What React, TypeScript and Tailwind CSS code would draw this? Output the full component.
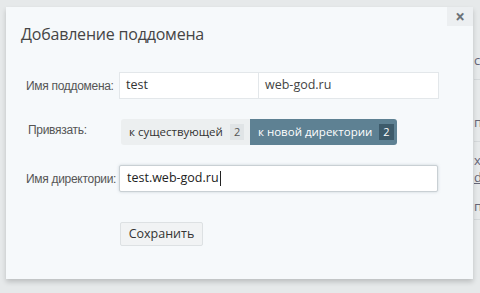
import React from "react";

const font = { fontFamily: '"Open Sans", "Noto Sans", Arial, sans-serif' };
const labelFont = { fontFamily: '"Liberation Sans", Arial, sans-serif' };

function Label({ children, className = "" }: { children: React.ReactNode; className?: string }) {
  return (
    <div
      className={`w-[93px] shrink-0 whitespace-nowrap text-[12px] tracking-[-0.3px] text-[#555] ${className}`}
      style={labelFont}
    >
      {children}
    </div>
  );
}

export default function App() {
  return (
    <div className="flex h-[293px] w-[480px] overflow-hidden bg-[#e6e9ea] pt-[7px] pl-[6px]" style={font}>
      <div className="relative h-[272px] w-[467px] shrink-0 bg-[#f6f9fb] shadow-[0_3px_5px_rgba(0,0,0,0.18)]">
        <button
          type="button"
          className="absolute right-0 top-0 flex h-[19px] w-[26px] items-center justify-center bg-[#eceff1] text-[17px] font-bold leading-none text-[#6b7278]"
        >
          ×
        </button>

        <h1 className="pl-[15px] pt-[16px] text-[16px] leading-[22px] tracking-[-0.2px] text-[#454545]">
          Добавление поддомена
        </h1>

        <div className="mt-[27px] flex items-center pl-[20px]">
          <Label>Имя поддомена:</Label>
          <div className="flex h-[27px] w-[320px] border border-[#e3e7ea] bg-white text-[12.5px] text-[#333]">
            <div className="flex w-[139px] items-center border-r border-[#e3e7ea] pl-[6px]">test</div>
            <div className="flex flex-1 items-center pl-[6px] text-[#444]">web-god.ru</div>
          </div>
        </div>

        <div className="mt-[20px] flex items-center pl-[22px]">
          <Label className="w-[91px] -mt-[5px]">Привязать:</Label>
          <div className="flex h-[26px] text-[11.5px]">
            <div className="flex w-[129px] items-center gap-[7px] rounded-l-[3px] bg-[#eceff0] pl-[8px] text-[#333]">
              к существующей
              <span className="flex h-[16px] items-center bg-[#e0e4e6] px-[4px] text-[11px] text-[#555]">2</span>
            </div>
            <div className="flex w-[147px] items-center gap-[7px] rounded-r-[3px] bg-[#5e8193] pl-[8px] text-white">
              к новой директории
              <span className="flex h-[16px] items-center bg-[#3d5b6b] px-[4px] text-[11px] text-white">2</span>
            </div>
          </div>
        </div>

        <div className="mt-[20px] flex items-center pl-[20px]">
          <Label>Имя директории:</Label>
          <div className="flex h-[27px] w-[319px] items-center rounded-[2px] border border-[#c9d0d4] bg-white pl-[7px] text-[12.5px] text-[#222] shadow-[0_0_3px_rgba(120,140,150,0.35)]">
            test.web-god.ru
            <span className="ml-[1px] h-[15px] w-px bg-[#222]" />
          </div>
        </div>

        <div className="mt-[28px] pl-[114px]">
          <button
            type="button"
            className="h-[24px] w-[83px] rounded-[2px] border border-[#dde1e3] bg-[#f1f3f4] text-[12.5px] text-[#333]"
          >
            Сохранить
          </button>
        </div>
      </div>

      <div className="flex w-[20px] shrink-0 flex-col pl-[1px] text-[13px] leading-none text-[#667]">
        <div className="mt-[47px] h-[26px] border-b border-[#d5d9db]">c</div>
        <div className="mt-[36px] h-[26px] border-b border-[#d5d9db]">п</div>
        <div className="mt-[12px]">xe</div>
        <div className="mt-[4px] underline">d</div>
        <div className="mt-[16px] border-b border-[#d5d9db] pb-[6px]">п</div>
      </div>
    </div>
  );
}
